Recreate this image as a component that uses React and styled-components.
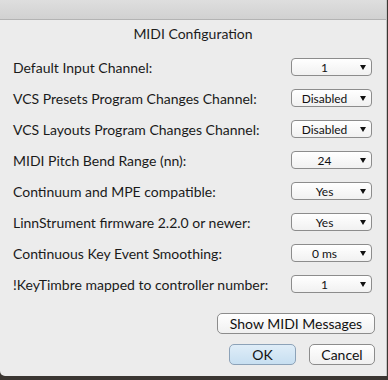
import React from 'react';
import styled, { createGlobalStyle } from 'styled-components';

const GlobalStyle = createGlobalStyle`
  html, body {
    margin: 0;
    padding: 0;
    background: #3b3632;
  }
  body {
    width: 388px;
    height: 380px;
    overflow: hidden;
    font-family: Lato, "Open Sans", sans-serif;
  }
`;

const Screen = styled.div`
  display: flex;
  width: 388px;
  height: 380px;
`;

const Window = styled.div`
  width: 386px;
  height: 376px;
  display: flex;
  flex-direction: column;
  background: #ececec;
  border-bottom-left-radius: 5px;
  border-right: 1px solid #c4c4c4;
  overflow: hidden;
`;

const TitleBar = styled.div`
  height: 19px;
  flex: none;
  background: linear-gradient(#dedede, #d1d1d1);
  border-bottom: 1px solid #b3b3b3;
`;

const Sheet = styled.div`
  flex: 1;
  display: flex;
  flex-direction: column;
  padding-top: 6px;
`;

const Heading = styled.h1`
  margin: 0;
  height: 16px;
  line-height: 16px;
  font-size: 14px;
  font-weight: 400;
  color: #1c1c1c;
  text-align: center;
`;

const Rows = styled.div`
  display: flex;
  flex-direction: column;
  gap: 13px;
  margin-top: 16px;
  padding: 0 14px 0 13px;
`;

const Row = styled.div`
  display: flex;
  align-items: center;
  justify-content: space-between;
  height: 18px;
`;

const Label = styled.span`
  font-size: 14px;
  color: #1a1a1a;
`;

const Select = styled.div`
  width: 81px;
  height: 18px;
  box-sizing: border-box;
  display: flex;
  align-items: center;
  border: 1px solid #8c8c8c;
  border-radius: 4px;
  background: linear-gradient(#ffffff, #f1f1f1);
  font-size: 12px;
  color: #111;
`;

const SelectValue = styled.span`
  flex: 1;
  text-align: center;
  padding-left: 1px;
`;

const Arrow = styled.span`
  width: 0;
  height: 0;
  margin-right: 5px;
  margin-left: 4px;
  border-left: 3.5px solid transparent;
  border-right: 3.5px solid transparent;
  border-top: 5px solid #111;
`;

const Actions = styled.div`
  display: flex;
  flex-direction: column;
  align-items: flex-end;
  gap: 10px;
  margin-top: 20px;
  padding-right: 11px;
`;

const ButtonRow = styled.div`
  display: flex;
  gap: 13px;
`;

const Button = styled.button`
  height: 21px;
  width: ${(p) => p.$width}px;
  box-sizing: border-box;
  padding: 0;
  font-family: Lato, "Open Sans", sans-serif;
  font-size: 14px;
  color: #111;
  border: 1px solid ${(p) => (p.$primary ? '#8ca2b8' : '#8c8c8c')};
  border-radius: 5px;
  background: ${(p) =>
    p.$primary
      ? 'linear-gradient(#dfedf8, #c7dff1)'
      : 'linear-gradient(#ffffff, #f0f0f0)'};
`;

const settings = [
  ['Default Input Channel:', '1'],
  ['VCS Presets Program Changes Channel:', 'Disabled'],
  ['VCS Layouts Program Changes Channel:', 'Disabled'],
  ['MIDI Pitch Bend Range (nn):', '24'],
  ['Continuum and MPE compatible:', 'Yes'],
  ['LinnStrument firmware 2.2.0 or newer:', 'Yes'],
  ['Continuous Key Event Smoothing:', '0 ms'],
  ['!KeyTimbre mapped to controller number:', '1'],
];

export default function App() {
  return (
    <Screen>
      <GlobalStyle />
      <Window>
        <TitleBar />
        <Sheet>
          <Heading>MIDI Configuration</Heading>
          <Rows>
            {settings.map(([label, value]) => (
              <Row key={label}>
                <Label>{label}</Label>
                <Select>
                  <SelectValue>{value}</SelectValue>
                  <Arrow />
                </Select>
              </Row>
            ))}
          </Rows>
          <Actions>
            <Button $width={158}>Show MIDI Messages</Button>
            <ButtonRow>
              <Button $width={67} $primary>
                OK
              </Button>
              <Button $width={66}>Cancel</Button>
            </ButtonRow>
          </Actions>
        </Sheet>
      </Window>
    </Screen>
  );
}
